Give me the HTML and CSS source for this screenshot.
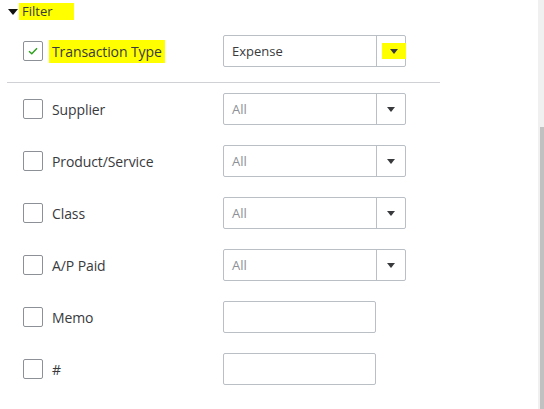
FILE: index.html
```html
<!DOCTYPE html>
<html lang="en">
<head>
    <meta charset="UTF-8" />
    <title>Report filters</title>
    <link rel="stylesheet" href="styles.css">
</head>
<body>
    <div class="panel">
        <div class="section-head">
            <span class="caret"></span>
            <span class="section-title hl">Filter</span>
        </div>

        <div class="row row-first">
            <span class="check checked"><svg width="10" height="8" viewBox="0 0 10 8"><path d="M1 4.2 L3.8 6.8 L9 1.2" fill="none" stroke="#2ca01c" stroke-width="1.4"/></svg></span>
            <span class="label"><span class="hl hl-label">Transaction Type</span></span>
            <div class="select">
                <span class="select-value dark">Expense</span>
                <span class="select-btn"><span class="hl-arrow"><span class="arrow"></span></span></span>
            </div>
        </div>

        <hr class="divider">

        <div class="row">
            <span class="check"></span>
            <span class="label">Supplier</span>
            <div class="select">
                <span class="select-value">All</span>
                <span class="select-btn"><span class="arrow"></span></span>
            </div>
        </div>

        <div class="row">
            <span class="check"></span>
            <span class="label">Product/Service</span>
            <div class="select">
                <span class="select-value">All</span>
                <span class="select-btn"><span class="arrow"></span></span>
            </div>
        </div>

        <div class="row">
            <span class="check"></span>
            <span class="label">Class</span>
            <div class="select">
                <span class="select-value">All</span>
                <span class="select-btn"><span class="arrow"></span></span>
            </div>
        </div>

        <div class="row">
            <span class="check"></span>
            <span class="label">A/P Paid</span>
            <div class="select">
                <span class="select-value">All</span>
                <span class="select-btn"><span class="arrow"></span></span>
            </div>
        </div>

        <div class="row">
            <span class="check"></span>
            <span class="label">Memo</span>
            <div class="text-box"></div>
        </div>

        <div class="row">
            <span class="check"></span>
            <span class="label">#</span>
            <div class="text-box"></div>
        </div>
    </div>

    <div class="scrollbar"><div class="thumb"></div></div>
</body>
</html>
```

FILE: styles.css
```css
body {
    margin: 0;
    background: #fff;
    font-family: "Open Sans", "Noto Sans", sans-serif;
    color: #393a3d;
}
.panel {
    padding: 3px 0 0 0;
}
.section-head {
    display: flex;
    align-items: center;
    height: 17px;
    padding-left: 8px;
}
.caret {
    width: 0;
    height: 0;
    border-left: 5px solid transparent;
    border-right: 5px solid transparent;
    border-top: 6px solid #111;
    margin-right: 1px;
}
.section-title {
    font-size: 13px;
    line-height: 17px;
    padding: 0 3px;
    width: 49px;
}
.hl {
    background: #ffff00;
}
.row {
    display: flex;
    align-items: center;
    height: 32px;
    padding-left: 23px;
    margin-bottom: 20px;
}
.row-first {
    margin-top: 15px;
}
.check {
    box-sizing: border-box;
    width: 20px;
    height: 20px;
    border: 1px solid #8d9096;
    border-radius: 2px;
    display: flex;
    align-items: center;
    justify-content: center;
    flex: none;
}
.label {
    width: 171px;
    padding-left: 9px;
    font-size: 14px;
    letter-spacing: -0.1px;
}
.hl-label {
    padding: 2px 3px;
    margin-left: -3px;
}
.select {
    box-sizing: border-box;
    width: 183px;
    height: 32px;
    border: 1px solid #babec5;
    border-radius: 2px;
    display: flex;
}
.select-value {
    flex: 1;
    padding-left: 8px;
    font-size: 13px;
    line-height: 30px;
    color: #8d9096;
    border-right: 1px solid #babec5;
}
.select-value.dark {
    color: #393a3d;
}
.select-btn {
    width: 28px;
    display: flex;
    align-items: center;
    justify-content: center;
}
.hl-arrow {
    width: 24px;
    height: 16px;
    background: #ffff00;
    display: flex;
    align-items: center;
    justify-content: center;
    margin-left: 3px;
    margin-right: -3px;
}
.arrow {
    width: 0;
    height: 0;
    border-left: 4px solid transparent;
    border-right: 4px solid transparent;
    border-top: 5px solid #393a3d;
}
.text-box {
    box-sizing: border-box;
    width: 153px;
    height: 32px;
    border: 1px solid #babec5;
    border-radius: 2px;
}
.divider {
    border: 0;
    border-top: 1px solid #cfd1d4;
    margin: -5px 0 10px 7px;
    width: 433px;
}
.scrollbar {
    position: fixed;
    top: 0;
    right: 0;
    width: 6px;
    height: 100%;
    background: #f0f0f0;
}
.thumb {
    position: absolute;
    top: 127px;
    right: 0;
    bottom: 0;
    width: 4px;
    background: #c1c1c1;
}
```
